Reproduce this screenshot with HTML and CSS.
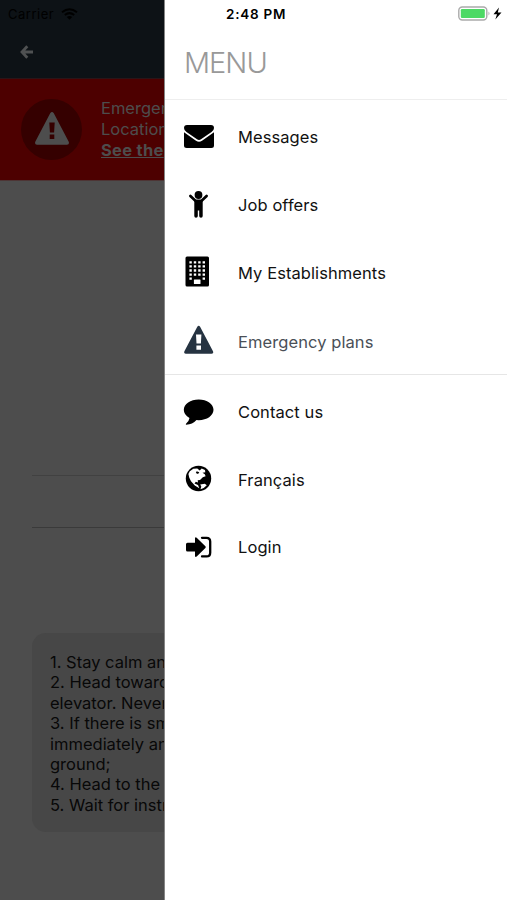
FILE: index.html
```
<!DOCTYPE html>
<html lang="en">
<head>
    <meta charset="UTF-8">
    <meta name="viewport" content="width=device-width, initial-scale=1.0">
    <title>Emergency plans</title>
    <link rel="stylesheet" href="styles.css">
</head>
<body>
    <div class="app">
        <main class="page">
            <header class="topbar">
                <div class="carrier">
                    <span>Carrier</span>
                    <svg width="17" height="12" viewBox="0 0 17 12" fill="none" stroke="#000" stroke-width="2">
                        <path d="M1 4.2Q8.500-1.800 16 4.200M3.800 7Q8.500 3.300 13.200 7"/>
                        <path d="M5.800 9Q8.500 7 11.200 9L8.500 11.800Z" fill="#000" stroke="none"/>
                    </svg>
                </div>
                <svg class="back" width="14" height="14" viewBox="0 0 14 14" fill="none" stroke="#4f5152" stroke-width="2.800">
                    <path d="M7.300 1.300L2 7l5.300 5.700M2.300 7H13"/>
                </svg>
            </header>
            <section class="alert">
                <div class="alert-icon">
                    <svg width="36" height="33" viewBox="0 0 36 33">
                        <path fill="#4d4d4d" fill-rule="evenodd" d="M16.200 1.200Q18-1 19.800 1.200L34.600 29.500Q35.800 32.500 33 32.800H3Q.2 32.500 1.400 29.500ZM15.300 10.500L15.900 20.500H20.100L20.700 10.500ZM15.700 22.500V27H20.300V22.500Z"/>
                    </svg>
                </div>
                <div class="alert-text">
                    Emergency<br>
                    Location<br>
                    <a class="alert-link">See the</a>
                </div>
            </section>
            <div class="field"></div>
            <div class="steps">
                1. Stay calm and<br>
                2. Head towards<br>
                elevator. Never<br>
                3. If there is smoke<br>
                immediately and<br>
                ground;<br>
                4. Head to the<br>
                5. Wait for instructions
            </div>
        </main>

        <nav class="drawer">
            <div class="status">
                <span class="time">2:48 PM</span>
                <svg class="battery" width="44" height="15" viewBox="0 0 44 15">
                    <rect x=".8" y="1" width="28" height="13" rx="3.500" fill="#fff" stroke="#aaa" stroke-width="1.400"/>
                    <rect x="2.800" y="3" width="24" height="9" rx="1.200" fill="#4cd964"/>
                    <path d="M30.500 5.500Q32.500 7.500 30.500 9.500Z" fill="#aaa"/>
                    <path d="M41 1.500L35.500 8.300H39L37.300 13.500L43.500 6.500H39.800Z"/>
                </svg>
            </div>
            <h1 class="title">MENU</h1>
            <ul class="menu">
                <li class="item">
                    <svg class="icon" width="30" height="30" viewBox="0 0 30 30">
                        <path d="M0 6Q0 3 3 3H27Q30 3 30 6Q30 8.500 27.500 10L17 17.300Q15 18.700 13 17.300L2.500 10Q0 8.500 0 6Z"/>
                        <path d="M0 10.300L12 18.700Q15 20.700 18 18.700L30 10.300V23.500Q30 26 27.300 26H2.700Q0 26 0 23.500Z"/>
                    </svg>
                    <span>Messages</span>
                </li>
                <li class="item">
                    <svg class="icon" width="30" height="30" viewBox="0 0 30 30">
                        <circle cx="14.500" cy="5" r="3.900"/>
                        <path d="M6.400 6L11.400 10.800H17.600L22.600 6" fill="none" stroke="#000" stroke-width="2.700" stroke-linecap="round" stroke-linejoin="round"/>
                        <path d="M10.300 10H18.700V26Q18.700 27.800 17 27.800Q15.200 27.800 15.200 26V20.500H13.800V26Q13.800 27.800 12 27.800Q10.300 27.800 10.300 26Z"/>
                    </svg>
                    <span>Job offers</span>
                </li>
                <li class="item">
                    <svg class="icon" width="30" height="30" viewBox="0 0 30 30">
                        <rect x="1.500" y="-1.500" width="23.500" height="30" rx="1.500"/>
                        <path d="M5.400 4.300H21.400M5.400 8.400H21.400M5.400 12.500H21.400M5.400 16.600H21.400" stroke="#fff" stroke-width="2.300" stroke-dasharray="2.400 2"/>
                        <path d="M5.400 20.600H7.800M18.600 20.600H21" stroke="#fff" stroke-width="2.300"/>
                        <rect x="9.900" y="21.500" width="6.600" height="4.500" rx=".5" fill="#fff"/>
                    </svg>
                    <span>My Establishments</span>
                </li>
                <li class="item active">
                    <svg class="icon" width="30" height="30" viewBox="0 0 30 30">
                        <path fill="#263341" fill-rule="evenodd" d="M13.300 -.3Q14.700-2 16.100-.3L29 24.200Q29.900 26.600 27.500 26.800H1.900Q-.5 26.600 .4 24.200ZM12 7.500L12.500 16.500H16.900L17.400 7.500ZM12.400 18.500V22.700H17V18.500Z"/>
                    </svg>
                    <span>Emergency plans</span>
                </li>
            </ul>
            <ul class="menu">
                <li class="item">
                    <svg class="icon" width="30" height="30" viewBox="0 0 30 30">
                        <path d="M14.700 2.500C23 2.500 29.500 7 29.500 12.800C29.500 18.600 23 23.200 14.700 23.200L12.500 23.100Q8.500 27.500 2.200 27.800Q1.300 27.300 2.200 26.400Q5 24.300 5.500 21Q-.2 18 -.2 12.800C-.2 7 6.500 2.500 14.700 2.500Z"/>
                    </svg>
                    <span>Contact us</span>
                </li>
                <li class="item">
                    <svg class="icon" width="30" height="30" viewBox="0 0 30 30">
                        <circle cx="14.500" cy="13.500" r="12.700"/>
                        <path fill="#fff" d="M5.800 6.300L9.300 3.800L13.300 3.600L15.700 5.400L17.700 3.500L21 5L21.300 7.200L18.500 7.700L20.800 9.200L21.600 11.200L18.800 12.300L16 15L13.700 15.300L14 17.600L11.800 16.700L10.500 18.400L14 20L15.300 23.300L10.800 20.400L7 16.300L5.300 12.800L4.400 9Z"/>
                        <path fill="#fff" d="M16.200 19.400L20.800 18.800L22.800 20.300Q20.500 23.200 16.500 24.300L17.300 21.600Z"/>
                        <path d="M12.700 6.200L15.300 7.200L14 9.100L11.800 8Z"/>
                    </svg>
                    <span>Français</span>
                </li>
                <li class="item item-last">
                    <svg class="icon" width="30" height="30" viewBox="0 0 30 30">
                        <path d="M3.500 10.700H11V6.200Q11.300 4.500 12.700 5.700L21.400 14.200Q22.200 15 21.400 15.900L12.700 24.500Q11.300 25.700 11 24V19.500H3.500Q2 19.500 2 18V12.200Q2 10.700 3.500 10.700Z"/>
                        <path d="M18 5.800H22.500Q26.200 5.800 26.200 9.500V20.700Q26.200 24.400 22.500 24.400H18" fill="none" stroke="#000" stroke-width="2.300" stroke-linecap="round"/>
                    </svg>
                    <span>Login</span>
                </li>
            </ul>
        </nav>
    </div>
</body>
</html>
```
FILE: styles.css
```
* { box-sizing: border-box; }
body { margin: 0; font-family: Inter, sans-serif; background: #fff; }
.app { display: flex; height: 900px; overflow: hidden; }

/* dimmed page behind the drawer */
.page { width: 165px; flex: none; overflow: hidden; white-space: nowrap; background: #4d4d4d; border-right: 1px solid #858585; }
.topbar { height: 79px; background: #0d1216; border-bottom: 1px solid #2a1518; }
.carrier { display: flex; align-items: center; gap: 7px; height: 27px; padding-left: 8px; font-size: 13px; letter-spacing: 0.5px; color: #000; }
.back { display: block; margin: 18px 0 0 20px; }
.alert { display: flex; align-items: center; gap: 19px; height: 102px; padding-left: 21px; background: #4d0000; border-bottom: 1px solid #4d3535; }
.alert-icon { display: flex; flex: none; align-items: center; justify-content: center; width: 61px; height: 61px; padding-bottom: 3px; border-radius: 50%; background: #350000; }
.alert-text { font-size: 16.5px; line-height: 20.7px; color: #4d4d4d; }
.alert-link { font-weight: bold; text-decoration: underline; letter-spacing: 0.3px; }
.field { height: 53px; margin: 294px 0 0 32px; border-top: 1px solid #414141; border-bottom: 1px solid #3a3a3a; }
.steps { width: 440px; height: 199px; margin: 105px 0 0 32px; padding: 19px 18px; border-radius: 14px; background: #474747; font-size: 16.5px; line-height: 20.4px; color: #080808; }

.drawer { flex: 1; background: #fff; }
.status { display: flex; align-items: center; justify-content: space-between; height: 27px; padding: 0 5px 0 61px; }
.time { font-size: 13.5px; font-weight: 600; letter-spacing: 0.75px; }
.title { height: 73px; margin: 0; padding: 15px 0 0 19px; border-bottom: 1px solid #eee; font-size: 29px; line-height: 42px; font-weight: 300; letter-spacing: -1px; color: #999; }
.menu { height: 275px; margin: 0; padding: 3px 0 0; list-style: none; border-bottom: 1px solid #e6e6e6; }
.menu:last-child { border-bottom: none; }
.item { display: flex; align-items: center; gap: 24px; height: 68.4px; padding-left: 19px; font-size: 16.5px; letter-spacing: 0.08px; color: #111; }
.item span { padding-bottom: 1px; }
.item-last { height: 65px; }
.icon { flex: none; overflow: visible; margin-top: -1px; }
.active { color: #4a4f57; }
```
